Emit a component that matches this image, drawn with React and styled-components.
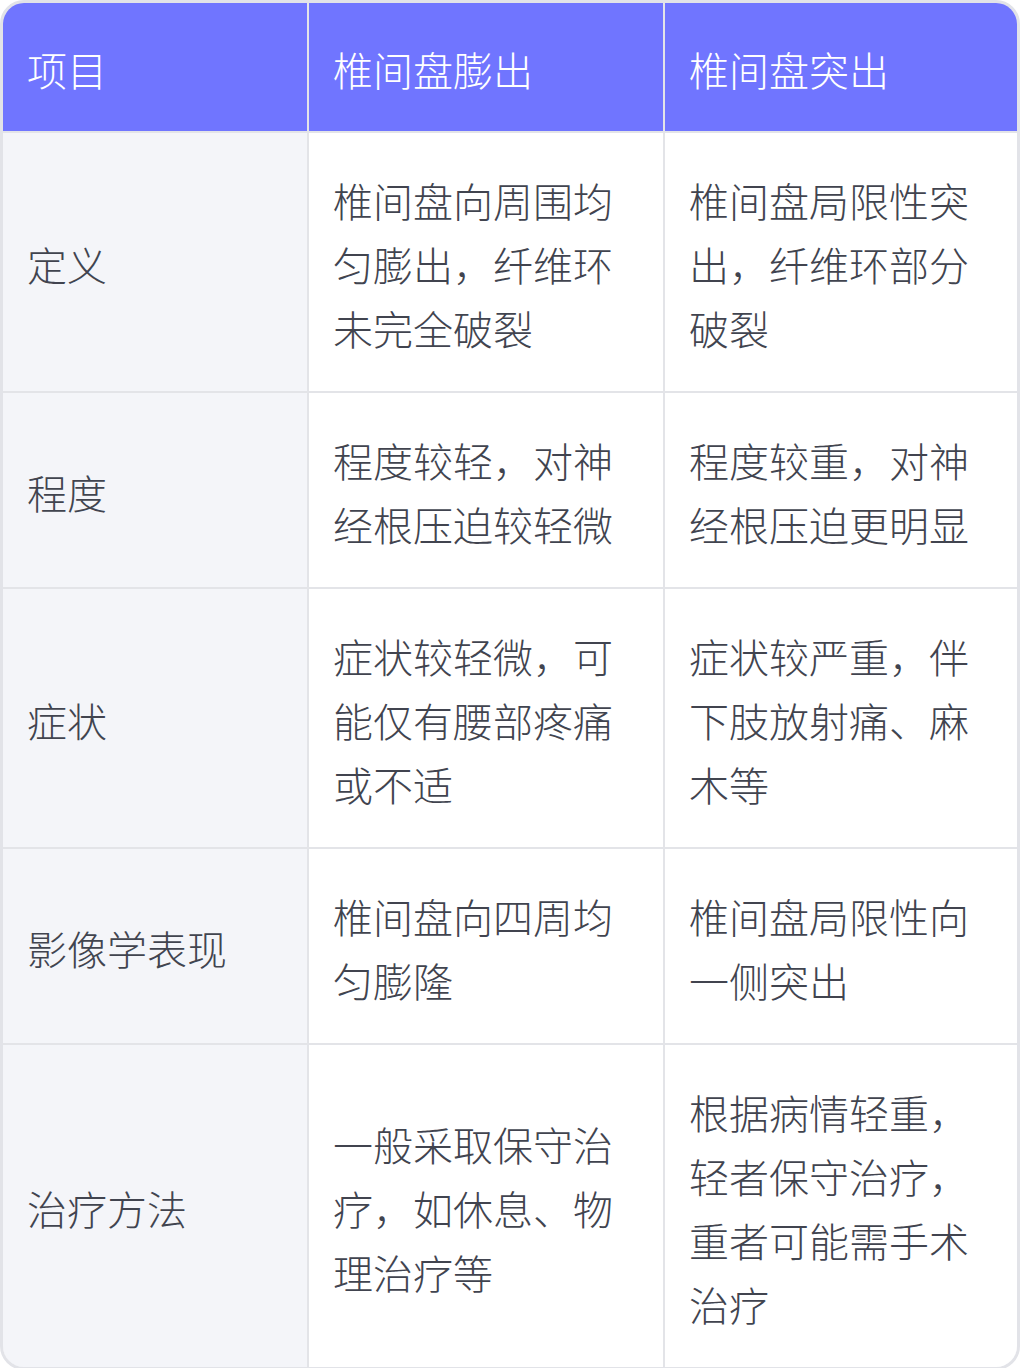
import React from 'react';
import styled, { createGlobalStyle } from 'styled-components';

const GlobalStyle = createGlobalStyle`
  html, body {
    margin: 0;
    padding: 0;
    background: #ffffff;
  }
  body {
    font-family: "Noto Sans CJK SC", "Noto Sans", sans-serif;
  }
`;

const rows = [
  {
    label: '定义',
    bulge: '椎间盘向周围均匀膨出，纤维环未完全破裂',
    herniation: '椎间盘局限性突出，纤维环部分破裂',
  },
  {
    label: '程度',
    bulge: '程度较轻，对神经根压迫较轻微',
    herniation: '程度较重，对神经根压迫更明显',
  },
  {
    label: '症状',
    bulge: '症状较轻微，可能仅有腰部疼痛或不适',
    herniation: '症状较严重，伴下肢放射痛、麻木等',
  },
  {
    label: '影像学表现',
    bulge: '椎间盘向四周均匀膨隆',
    herniation: '椎间盘局限性向一侧突出',
  },
  {
    label: '治疗方法',
    bulge: '一般采取保守治疗，如休息、物理治疗等',
    herniation: '根据病情轻重，轻者保守治疗，重者可能需手术治疗',
  },
];

function App() {
  return (
    <>
      <GlobalStyle />
      <TableFrame>
        <Grid>
          <HeadCell>项目</HeadCell>
          <HeadCell>椎间盘膨出</HeadCell>
          <HeadCell>椎间盘突出</HeadCell>
          {rows.map((row) => (
            <React.Fragment key={row.label}>
              <Cell $label>{row.label}</Cell>
              <Cell>{row.bulge}</Cell>
              <Cell>{row.herniation}</Cell>
            </React.Fragment>
          ))}
        </Grid>
      </TableFrame>
    </>
  );
}

export default App;

const TableFrame = styled.div`
  width: 1020px;
  box-sizing: border-box;
  border: 3px solid #e2e3e8;
  border-radius: 24px;
  overflow: hidden;
`;

const Grid = styled.div`
  display: grid;
  grid-template-columns: 304px 354px 352px;
  gap: 2px;
  background: #e3e4e8;
`;

const HeadCell = styled.div`
  background: #7075ff;
  color: #ffffff;
  font-size: 40px;
  line-height: 64px;
  font-weight: 300;
  padding: 34px 24px 30px;
  display: flex;
  align-items: center;
`;

const Cell = styled.div`
  background: ${(p) => (p.$label ? '#f4f5f9' : '#ffffff')};
  color: #41444f;
  font-size: 40px;
  line-height: 64px;
  font-weight: 300;
  padding: 35px 24px 31px;
  display: flex;
  align-items: center;
  word-break: break-all;
`;
